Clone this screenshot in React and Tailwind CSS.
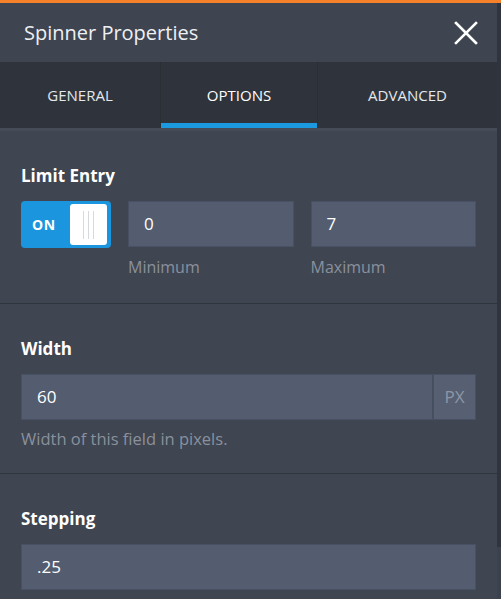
import React from 'react';

const font = { fontFamily: '"Open Sans", "Noto Sans", sans-serif' };

const Section = ({ title, children, className = '' }) => (
  <div className={`px-[21px] pt-[33px] ${className}`}>
    <div className="text-[17px] font-bold text-white leading-[24px] mb-[13px]">{title}</div>
    {children}
  </div>
);

const Field = ({ value, className = '' }) => (
  <div className={`h-[46px] bg-[#535d6f] border border-[#485163] flex items-center pl-[15px] text-[17px] text-white ${className}`}>
    {value}
  </div>
);

export default function App() {
  return (
    <div className="w-[501px] h-[599px] overflow-hidden bg-[#3f4551] flex flex-col" style={font}>
      {/* top accent */}
      <div className="h-[3px] bg-[#f5822a] shrink-0" />

      <div className="flex flex-1 min-h-0">
        <div className="flex-1 flex flex-col min-w-0">
          {/* Header */}
          <div className="h-[59px] flex items-center justify-between pl-[24px] pr-[20px] bg-[#3e4450] shrink-0">
            <h1 className="text-[20px] text-[#eef0f3] font-normal">Spinner Properties</h1>
            <svg width="24" height="24" viewBox="0 0 24 24" className="text-white mr-[-1px]">
              <path d="M2 2 L22 22 M22 2 L2 22" stroke="currentColor" strokeWidth="2.6" strokeLinecap="square" />
            </svg>
          </div>

          {/* Tabs */}
          <div className="h-[69px] bg-[#2f343c] flex shrink-0 border-b-[3px] border-[#454b57]">
            <div className="w-[160px] flex items-center justify-center text-[15px] text-[#e4e7eb] uppercase">General</div>
            <div className="w-[158px] relative flex items-center justify-center text-[15px] text-white uppercase border-l border-r border-[#2a2e35]">
              Options
              <span className="absolute left-0 right-0 bottom-0 h-[5px] bg-[#1b9ae0]" />
            </div>
            <div className="flex-1 flex items-center justify-center text-[15px] text-[#e4e7eb] uppercase">Advanced</div>
          </div>

          {/* Limit Entry */}
          <Section title="Limit Entry" className="pb-[24px] border-b border-[#30353d]">
            <div className="flex gap-[17px]">
              <div className="w-[90px] h-[47px] rounded-[4px] bg-[#1a95de] flex items-center justify-between pl-[11px] pr-[4px] shrink-0">
                <span className="text-[14px] font-bold text-white tracking-[0.5px]">ON</span>
                <div className="w-[37px] h-[41px] rounded-[3px] bg-white flex items-center justify-center gap-[4px]">
                  <span className="w-px h-[28px] bg-[#d6d9de]" />
                  <span className="w-px h-[28px] bg-[#d6d9de]" />
                  <span className="w-px h-[28px] bg-[#d6d9de]" />
                </div>
              </div>
              <div className="flex-1">
                <Field value="0" />
                <div className="mt-[8px] text-[16px] leading-[24px] text-[#8a919d]">Minimum</div>
              </div>
              <div className="flex-1">
                <Field value="7" />
                <div className="mt-[8px] text-[16px] leading-[24px] text-[#8a919d]">Maximum</div>
              </div>
            </div>
          </Section>

          {/* Width */}
          <Section title="Width" className="pb-[22px] border-b border-[#30353d]">
            <div className="flex h-[46px] border border-[#485163]">
              <div className="flex-1 bg-[#535d6f] flex items-center pl-[15px] text-[17px] text-white">60</div>
              <div className="w-[43px] bg-[#566072] border-l-2 border-[#464f5f] flex items-center justify-center text-[17px] text-[#8d96a6]">PX</div>
            </div>
            <div className="mt-[7px] text-[16.5px] leading-[24px] text-[#8a919d]">Width of this field in pixels.</div>
          </Section>

          {/* Stepping */}
          <Section title="Stepping" className="pb-2">
            <Field value=".25" />
          </Section>
        </div>

        {/* scrollbar */}
        <div className="w-[4px] flex flex-col shrink-0">
          <div className="h-[544px] bg-[#30353d]" />
          <div className="flex-1 bg-[#3c424d]" />
        </div>
      </div>
    </div>
  );
}
